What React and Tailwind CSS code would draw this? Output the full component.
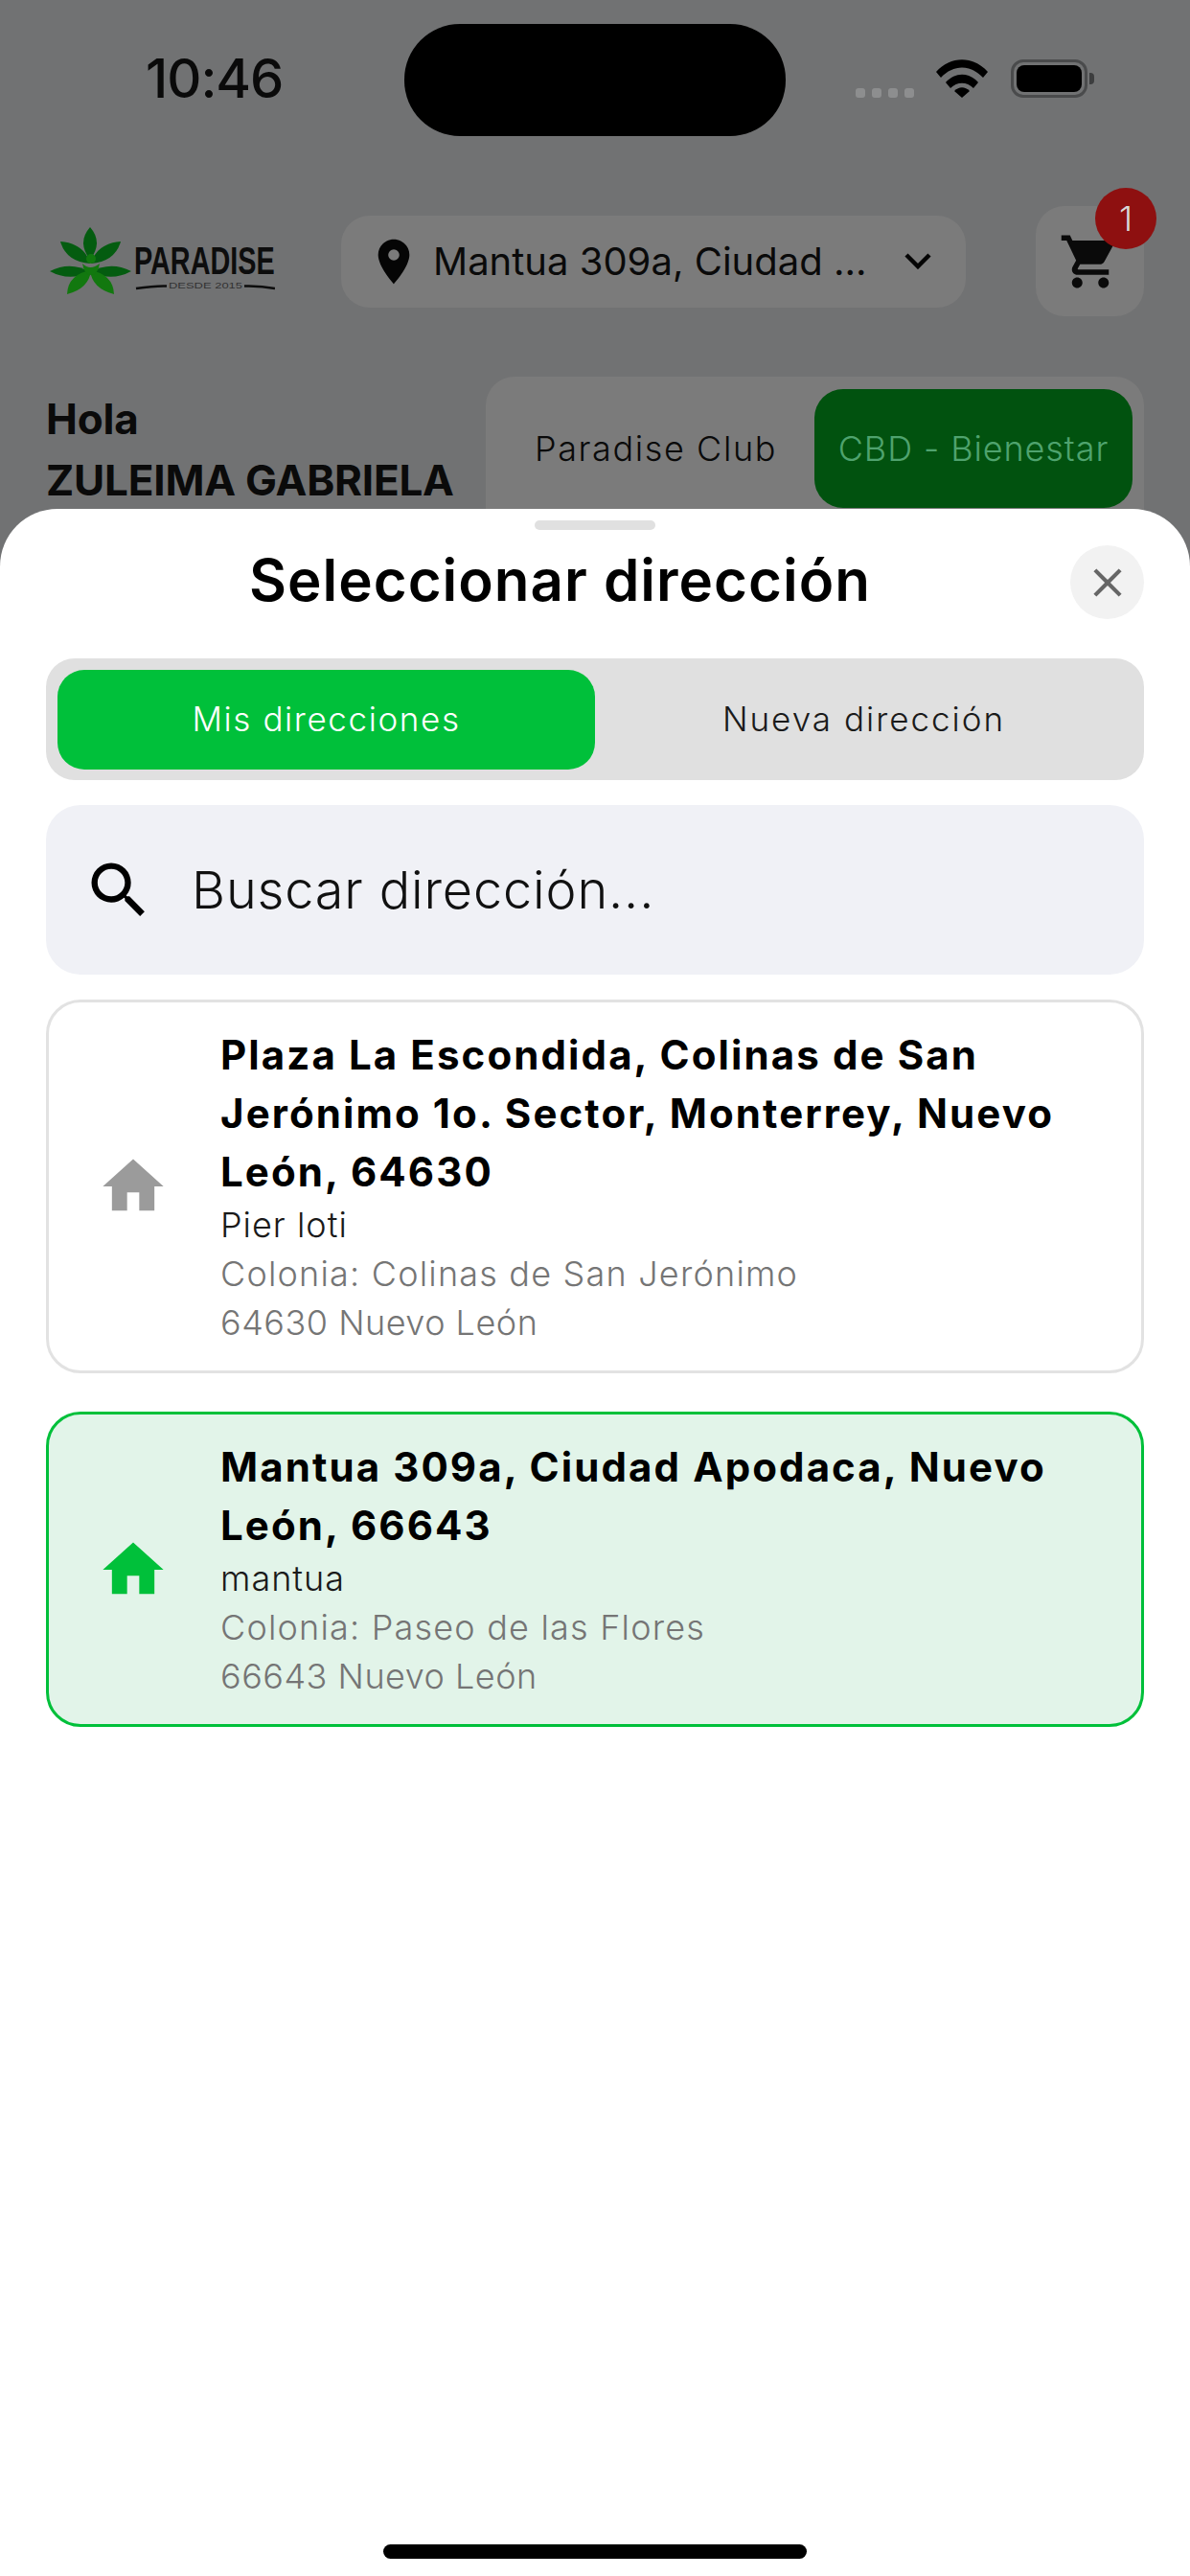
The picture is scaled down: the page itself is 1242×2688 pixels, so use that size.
import { MdClose, MdHome, MdLocationOn, MdSearch, MdShoppingCart } from 'react-icons/md';

const addresses = [
  {
    title: 'Plaza La Escondida, Colinas de San Jerónimo 1o. Sector, Monterrey, Nuevo León, 64630',
    name: 'Pier loti',
    colonia: 'Colonia: Colinas de San Jerónimo',
    zip: '64630 Nuevo León',
    selected: false,
  },
  {
    title: 'Mantua 309a, Ciudad Apodaca, Nuevo León, 66643',
    name: 'mantua',
    colonia: 'Colonia: Paseo de las Flores',
    zip: '66643 Nuevo León',
    selected: true,
  },
];

function Logo() {
  return (
    <svg viewBox="0 0 235 72" className="h-[72px] w-[235px] shrink-0">
      <path d="M42 0Q56 16 42 34Q28 16 42 0z" fill="#045c10" />
      <path d="M11 15Q36 17 42 38Q17 36 11 15z" fill="#045c10" />
      <path d="M74 15Q49 17 43 38Q68 36 74 15z" fill="#045c10" />
      <path d="M0 46Q22 35 42 47Q20 57 0 46z" fill="#045c10" />
      <path d="M85 46Q63 35 43 47Q65 57 85 46z" fill="#045c10" />
      <path d="M18 70Q19 49 43 45Q41 64 18 70z" fill="#12780f" />
      <path d="M67 70Q66 49 42 45Q44 64 67 70z" fill="#12780f" />
      <path d="M34 38Q42 46 52 38Q50 50 43 50Q36 50 34 38z" fill="#12780f" />
      <circle cx="43" cy="33" r="5" fill="#12780f" />
      <text transform="translate(88 49) scale(0.72 1)" fontFamily="Liberation Sans" fontWeight="700" fontSize="40" fill="#0d0d0d">
        PARADISE
      </text>
      <path d="M90 64Q110 61 122 61.500" fill="none" stroke="#0d0d0d" strokeWidth="2.500" />
      <path d="M203 61.500Q220 61 235 64" fill="none" stroke="#0d0d0d" strokeWidth="2.500" />
      <text x="124" y="64" textLength="77" lengthAdjust="spacingAndGlyphs" fontFamily="Liberation Sans" fontSize="9" fill="#333333">
        DESDE 2015
      </text>
    </svg>
  );
}

function StatusBar() {
  return (
    <div className="flex h-[215px] items-start pl-[152px]">
      <span className="mt-[50px] w-[270px] text-[56px] leading-[64px] font-medium tracking-[-1px] text-[#0a0a0a]">10:46</span>
      <div className="mt-[25px] h-[117px] w-[398px] rounded-[58px] bg-black" />
      <div className="mt-[92px] ml-[73px] flex h-[10px] gap-[7px]">
        <span className="h-[10px] w-[10px] rounded-[3px] bg-[#8d8e8f]" />
        <span className="h-[10px] w-[10px] rounded-[3px] bg-[#8d8e8f]" />
        <span className="h-[10px] w-[10px] rounded-[3px] bg-[#8d8e8f]" />
        <span className="h-[10px] w-[10px] rounded-[3px] bg-[#8d8e8f]" />
      </div>
      <svg viewBox="0 0 54 40" className="mt-[62px] ml-[23px] h-[40px] w-[54px]">
        <path d="M0 13C15-4 39-4 54 13l-5 6C36 5 18 5 5 19z" fill="#000" />
        <path d="M10 24c10-11 24-11 34 0l-5 6c-7-7-17-7-24 0z" fill="#000" />
        <path d="M19 33c5-5 11-5 16 0l-8 7z" fill="#000" />
      </svg>
      <div className="mt-[62px] ml-[24px] flex items-center">
        <div className="flex h-[40px] w-[80px] items-center justify-center rounded-[13px] border-[3px] border-[#4a4b4c]">
          <div className="h-[28px] w-[68px] rounded-[8px] bg-black" />
        </div>
        <div className="ml-[2px] h-[12px] w-[5px] rounded-r-[4px] bg-[#3d3e3f]" />
      </div>
    </div>
  );
}

function AddressCard({ address }) {
  const { title, name, colonia, zip, selected } = address;
  return (
    <div
      className={`flex items-center rounded-[36px] border-[3px] py-[24px] pr-[60px] pl-[50px] ${
        selected ? 'border-[#00c03a] bg-[#e2f4e9]' : 'border-[#e2e2e2] bg-white'
      }`}
    >
      <MdHome className={`h-[76px] w-[76px] shrink-0 ${selected ? 'text-[#00c03a]' : 'text-[#9b9b9b]'}`} />
      <div className="ml-[53px] min-w-0 flex-1">
        <p className="text-[42px] leading-[61px] font-bold tracking-[2.1px] text-black">{title}</p>
        <p className="text-[36px] leading-[51px] font-light tracking-[1px] text-[#1a1a1a]">{name}</p>
        <p className="text-[36px] leading-[51px] font-light tracking-[1.2px] text-[#757575]">{colonia}</p>
        <p className="text-[36px] leading-[51px] font-light tracking-[0.5px] text-[#757575]">{zip}</p>
      </div>
    </div>
  );
}

function AddressSheet() {
  return (
    <div className="absolute inset-x-0 top-[531px] bottom-0 flex flex-col rounded-t-[60px] bg-white px-[48px]">
      <div className="mx-auto mt-[12px] h-[10px] w-[126px] rounded-full bg-[#e0e0e0]" />
      <div className="mt-[16px] flex h-[77px] items-center">
        <h1 className="mb-[6px] ml-[212px] text-[60px] leading-none font-semibold tracking-[1px] text-black">Seleccionar dirección</h1>
        <button type="button" className="ml-auto flex h-[77px] w-[77px] items-center justify-center rounded-full bg-[#f2f2f2]">
          <MdClose className="h-[50px] w-[50px] text-[#666666]" />
        </button>
      </div>
      <div className="mt-[41px] flex h-[127px] items-center rounded-[30px] bg-[#e0e0e0] px-[12px]">
        <div className="flex h-[104px] w-[561px] items-center justify-center rounded-[28px] bg-[#00c03a] text-[35px] font-light tracking-[1.6px] text-white">
          Mis direcciones
        </div>
        <div className="flex flex-1 items-center justify-center text-[35px] font-light tracking-[2px] text-[#1a1a1a]">Nueva dirección</div>
      </div>
      <div className="mt-[26px] flex h-[177px] items-center rounded-[36px] bg-[#f0f1f6] pl-[38px]">
        <MdSearch className="h-[76px] w-[76px] shrink-0 text-black" />
        <span className="ml-[38px] text-[54px] font-light tracking-[0.85px] text-[#111111]">Buscar dirección...</span>
      </div>
      <div className="mt-[26px] flex flex-col gap-[40px]">
        {addresses.map((address) => (
          <AddressCard key={address.zip} address={address} />
        ))}
      </div>
      <div className="mx-auto mt-auto mb-[18px] h-[15px] w-[442px] rounded-full bg-black" />
    </div>
  );
}

export default function App() {
  return (
    <div className="relative h-[2688px] w-[1242px] overflow-hidden bg-[#717273] font-['Inter',sans-serif]">
      <StatusBar />
      <div className="flex h-[115px] items-center pr-[48px] pl-[52px]">
        <Logo />
        <div className="ml-[69px] flex h-[96px] w-[652px] items-center rounded-[30px] bg-[#7b7b7b] pl-[27px]">
          <MdLocationOn className="h-[56px] w-[56px] shrink-0 text-[#050505]" />
          <span className="ml-[13px] w-[454px] text-[40px] font-normal whitespace-nowrap text-[#0a0a0a]">Mantua 309a, Ciudad ...</span>
          <svg viewBox="0 0 28 17" className="ml-[38px] h-[17px] w-[28px]" fill="none" stroke="#050505" strokeWidth="4.5">
            <path d="M2 2l12 12L26 2" />
          </svg>
        </div>
        <div className="relative ml-auto flex h-[115px] w-[113px] items-center justify-center rounded-[30px] bg-[#7b7b7b]">
          <MdShoppingCart className="h-[66px] w-[66px] text-[#0a0a0a]" />
          <span className="absolute top-[-19px] right-[-13px] flex h-[64px] w-[64px] items-center justify-center rounded-full bg-[#8e1010] text-[36px] font-light text-[#d8d8d8]">
            1
          </span>
        </div>
      </div>
      <div className="mt-[63px] flex items-start pr-[48px] pl-[48px]">
        <div className="mt-[12px] w-[459px] text-[44px] leading-[64px] font-bold tracking-[-0.2px] text-[#0a0a0a]">
          <p>Hola</p>
          <p className="whitespace-nowrap">ZULEIMA GABRIELA</p>
        </div>
        <div className="flex h-[170px] w-[687px] items-start rounded-[30px] bg-[#7b7b7b] pt-[13px] pr-[12px] pl-[12px]">
          <div className="flex h-[124px] flex-1 items-center justify-center text-[36px] font-light tracking-[1.6px] text-[#0a0a0a]">Paradise Club</div>
          <div className="flex h-[124px] w-[332px] items-center justify-center rounded-[30px] bg-[#01520f] text-[36px] font-light tracking-[0.9px] text-[#4fa36e]">
            CBD - Bienestar
          </div>
        </div>
      </div>
      <AddressSheet />
    </div>
  );
}
